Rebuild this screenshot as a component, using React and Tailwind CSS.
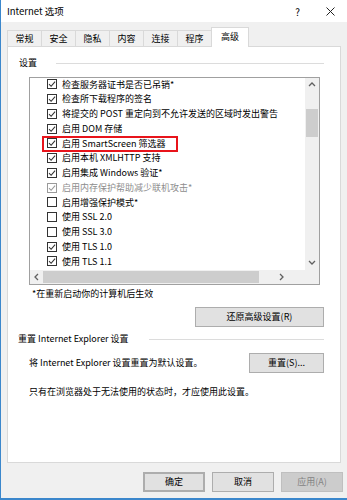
import React from 'react';

const items = [
  { label: '检查服务器证书是否已吊销*', checked: true },
  { label: '检查所下载程序的签名', checked: true },
  { label: '将提交的 POST 重定向到不允许发送的区域时发出警告', checked: true },
  { label: '启用 DOM 存储', checked: true },
  { label: '启用 SmartScreen 筛选器', checked: true, marked: true },
  { label: '启用本机 XMLHTTP 支持', checked: true },
  { label: '启用集成 Windows 验证*', checked: true },
  { label: '启用内存保护帮助减少联机攻击*', checked: true, disabled: true },
  { label: '启用增强保护模式*', checked: false },
  { label: '使用 SSL 2.0', checked: false },
  { label: '使用 SSL 3.0', checked: false },
  { label: '使用 TLS 1.0', checked: true },
  { label: '使用 TLS 1.1', checked: true },
  { label: '使用 TLS 1.2', checked: true },
];

const tabs = ['常规', '安全', '隐私', '内容', '连接', '程序'];

const Check = ({ checked, disabled }) => {
  const c = disabled ? '#9a9a9a' : '#333333';
  return (
    <svg width="10" height="10" viewBox="0 0 10 10" className="shrink-0">
      <rect x="0.5" y="0.5" width="9" height="9" fill="white" stroke={c} />
      {checked && <path d="M2 5.2 L4.1 7.3 L8.1 2.6" fill="none" stroke={c} strokeWidth="1.1" />}
    </svg>
  );
};

const Chevron = ({ dir }) => {
  const d = {
    up: 'M1 5 L4 2 L7 5',
    down: 'M1 2 L4 5 L7 2',
    left: 'M5 1 L2 4 L5 7',
    right: 'M2 1 L5 4 L2 7',
  }[dir];
  return (
    <svg width="8" height="8" viewBox="0 0 8 8">
      <path d={d} fill="none" stroke="#606060" strokeWidth="1.3" />
    </svg>
  );
};

const Button = ({ children, className = '' }) => (
  <div className={`h-[20px] flex items-center justify-center bg-[#e1e1e1] border border-[#adadad] ${className}`}>
    {children}
  </div>
);

export default function App() {
  return (
    <div className="w-[347px] h-[500px] flex flex-col bg-[#f0f0f0] border-l border-b-2 border-[#3b87cc] text-[9px] text-black font-['Noto_Sans_CJK_SC','Noto_Sans',sans-serif] overflow-hidden">
      {/* title bar */}
      <div className="h-[22px] bg-white flex items-center pl-[6px] shrink-0">
        <span className="text-[9.5px]">Internet 选项</span>
        <span className="ml-auto mr-[26px] text-[10px]">?</span>
        <svg width="9" height="9" viewBox="0 0 9 9" className="mr-[12px]">
          <path d="M0.5 0.5 L8.5 8.5 M8.5 0.5 L0.5 8.5" stroke="#222" strokeWidth="1" />
        </svg>
      </div>

      <div className="flex-1 flex flex-col px-[6px]">
        {/* tabs */}
        <div className="h-[24px] flex items-end shrink-0">
          {tabs.map((t) => (
            <div key={t} className="w-[35px] h-[16px] -mr-px flex items-center justify-center border border-b-0 border-[#d9d9d9] bg-[#f0f0f0]">
              {t}
            </div>
          ))}
          <div className="w-[38px] h-[20px] -mb-px relative z-10 flex items-center justify-center pb-[2px] border border-b-0 border-[#d9d9d9] bg-white">
            高级
          </div>
        </div>

        {/* panel */}
        <div className="h-[417px] bg-white border border-[#d9d9d9] flex flex-col">
          <div className="h-[14px] mt-[9px] flex items-center pl-[11px] pr-[16px]">
            <span>设置</span>
            <div className="flex-1 ml-[19px] h-px bg-[#dcdcdc]" />
          </div>

          {/* list box */}
          <div className="ml-[21px] mt-[7px] w-[291px] h-[208px] border border-[#a0a0a0] flex flex-col">
            <div className="flex-1 flex overflow-hidden">
              <div className="flex-1 overflow-hidden pl-[17px] -mt-[1px]">
                {items.map((it) => (
                  <div key={it.label} className="h-[14.75px] flex items-center gap-[5px] relative">
                    <Check checked={it.checked} disabled={it.disabled} />
                    <span className={`whitespace-nowrap ${it.disabled ? 'text-[#8d8d8d]' : ''}`}>{it.label}</span>
                    {it.marked && (
                      <div className="absolute left-[-5px] top-[-0.5px] w-[136px] h-[16px] border-2 border-[#e8141b]" />
                    )}
                  </div>
                ))}
              </div>
              <div className="w-[14px] bg-[#f0f0f0] flex flex-col items-center">
                <div className="h-[14px] flex items-center justify-center"><Chevron dir="up" /></div>
                <div className="mt-[17px] w-[12px] h-[28px] bg-[#cdcdcd]" />
                <div className="flex-1" />
                <div className="h-[14px] flex items-center justify-center"><Chevron dir="down" /></div>
              </div>
            </div>
            <div className="h-[14px] flex bg-[#f0f0f0]">
              <div className="w-[12px] flex items-center justify-center ml-[1px]"><Chevron dir="left" /></div>
              <div className="w-[216px] h-[12px] mt-[1px] bg-[#cdcdcd]" />
              <div className="flex-1 flex items-center justify-center"><Chevron dir="right" /></div>
              <div className="w-[14px]" />
            </div>
          </div>

          <div className="h-[14px] mt-[2px] ml-[24px] flex items-center">*在重新启动你的计算机后生效</div>

          <div className="mt-[6px] flex justify-end pr-[16px]">
            <Button className="w-[129px]">还原高级设置(R)</Button>
          </div>

          <div className="h-[14px] mt-[5px] flex items-center pl-[10px] pr-[16px]">
            <span>重置 Internet Explorer 设置</span>
            <div className="flex-1 ml-[20px] h-px bg-[#dcdcdc]" />
          </div>

          <div className="mt-[7px] flex items-center pl-[21px] pr-[16px]">
            <span>将 Internet Explorer 设置重置为默认设置。</span>
            <Button className="ml-auto w-[75px]">重置(S)...</Button>
          </div>

          <div className="h-[14px] mt-[12px] ml-[21px] flex items-center">只有在浏览器处于无法使用的状态时，才应使用此设置。</div>
        </div>

        {/* footer buttons */}
        <div className="mt-[9px] flex justify-end gap-[7px] -mr-[2px]">
          <Button className="w-[62px] border-2 border-[#0078d7]">确定</Button>
          <Button className="w-[62px]">取消</Button>
          <div className="w-[62px] h-[20px] flex items-center justify-center bg-[#cccccc] border border-[#bfbfbf] text-[#838383]">应用(A)</div>
        </div>
      </div>
    </div>
  );
}
